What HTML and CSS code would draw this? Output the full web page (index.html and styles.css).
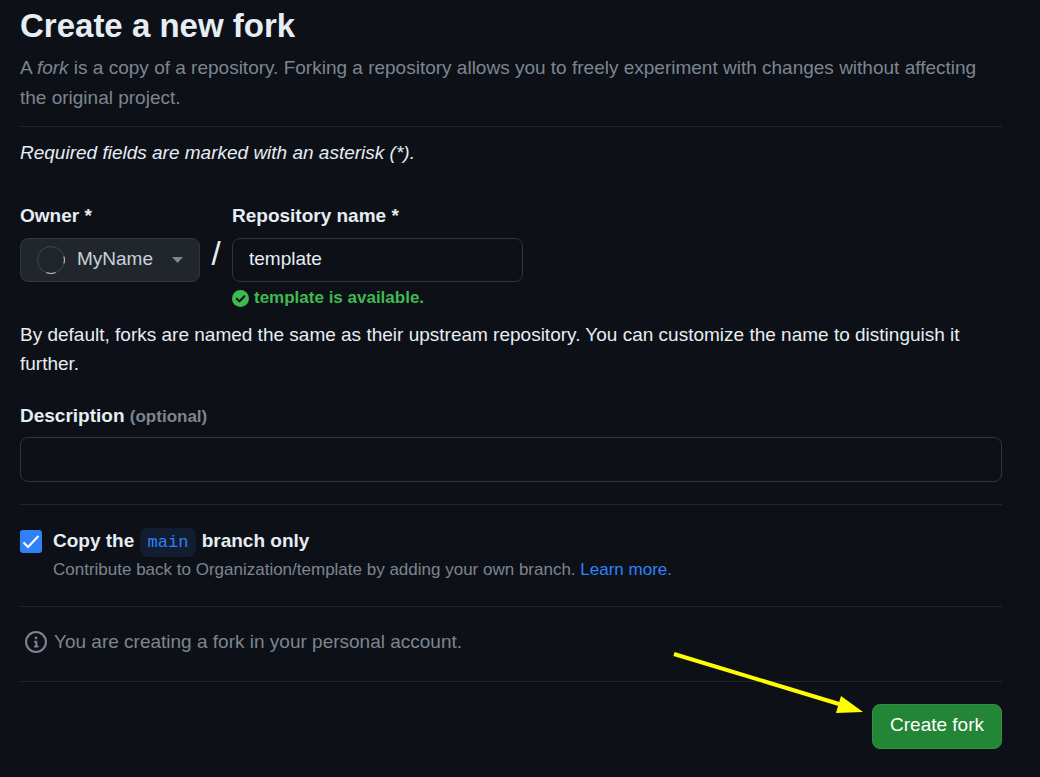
FILE: index.html
```html
<!DOCTYPE html>
<html lang="en">
<head>
<meta charset="utf-8">
<meta name="viewport" content="width=device-width, initial-scale=1">
<title>Create a new fork</title>
<link rel="stylesheet" href="styles.css">
</head>
<body>
<main class="page">
  <header class="intro">
    <h1 class="title">Create a new fork</h1>
    <p class="lead">A <em>fork</em> is a copy of a repository. Forking a repository allows you to freely experiment with changes without affecting the original project.</p>
  </header>
  <form class="form">
    <p class="required">Required fields are marked with an asterisk (*).</p>
    <div class="names">
      <div class="field">
        <label class="label" for="owner">Owner *</label>
        <div class="owner">
          <svg class="avatar" viewBox="0 0 28 28" fill="none" aria-hidden="true">
            <circle cx="14" cy="14" r="13.500" stroke="#43474b"/>
            <path d="M9.400 26.700A13.500 13.500 0 0 0 18.600 26.700M27 10.500A13.500 13.500 0 0 1 27 17.500" stroke="#c9c9c6"/>
          </svg>
          <select class="owner-select" id="owner"><option>MyName</option></select>
          <svg class="caret" viewBox="0 0 11 6" aria-hidden="true"><path d="M0 0h11L5.500 6z" fill="#7d8590"/></svg>
        </div>
      </div>
      <span class="slash">/</span>
      <div class="field">
        <label class="label" for="repo">Repository name *</label>
        <input class="input repo" id="repo" type="text" value="template">
        <p class="status">
          <svg class="status-icon" viewBox="0 0 17 17" aria-hidden="true">
            <circle cx="8.500" cy="8.500" r="8.500" fill="#3fb950"/>
            <path d="M4.700 8.700l2.700 2.700 5-5.200" fill="none" stroke="#0d1117" stroke-width="2" stroke-linecap="round" stroke-linejoin="round"/>
          </svg>
          template is available.
        </p>
      </div>
    </div>
    <p class="help">By default, forks are named the same as their upstream repository. You can customize the name to distinguish it further.</p>
    <div class="field description">
      <label class="label" for="description">Description <span class="optional">(optional)</span></label>
      <input class="input" id="description" type="text">
    </div>
    <div class="branch">
      <input class="check" id="main-only" type="checkbox" checked>
      <div class="branch-text">
        <label class="label" for="main-only">Copy the <code class="code">main</code> branch only</label>
        <p class="note">Contribute back to Organization/template by adding your own branch. <a class="link" href="#">Learn more.</a></p>
      </div>
    </div>
    <div class="account">
      <svg class="info" viewBox="0 0 16 16" fill="#7d8590" aria-hidden="true">
        <path d="M0 8a8 8 0 1 1 16 0A8 8 0 0 1 0 8Zm8-6.500a6.500 6.500 0 1 0 0 13 6.500 6.500 0 0 0 0-13ZM6.500 7.750A.75.75 0 0 1 7.250 7h1a.75.75 0 0 1 .75.75v2.750h.25a.75.75 0 0 1 0 1.500h-2a.75.75 0 0 1 0-1.500h.25v-2h-.25a.75.75 0 0 1-.75-.75ZM8 6a1 1 0 1 1 0-2 1 1 0 0 1 0 2Z"/>
      </svg>
      <p>You are creating a fork in your personal account.</p>
    </div>
    <div class="actions">
      <button class="submit" type="submit">Create fork</button>
      <svg class="arrow" viewBox="0 0 190 64" aria-hidden="true">
        <path d="M1 3L166 53" stroke="#ff0" stroke-width="4"/>
        <path d="M190 61L168 45l-5 17z" fill="#ff0"/>
      </svg>
    </div>
  </form>
</main>
</body>
</html>
```

FILE: styles.css
```css
* {
  box-sizing: border-box;
}

body {
  margin: 0;
  background: #0d1117;
  color: #e6edf3;
  font: 19px/29px "Liberation Sans", Arial, sans-serif;
}

h1,
p {
  margin: 0;
}

.page {
  padding: 5px 38px 28px 20px;
}

.intro {
  padding-bottom: 13px;
  border-bottom: 1px solid #21262d;
}

.title {
  margin-bottom: 6px;
  font-size: 33px;
  line-height: 42px;
}

.lead {
  color: #7d8590;
  line-height: 30px;
}

.required {
  margin-top: 11px;
  font-style: italic;
}

.names {
  display: flex;
  margin-top: 34px;
}

.field {
  display: flex;
  flex-direction: column;
  gap: 8px;
}

.label {
  font-weight: 600;
}

.owner {
  display: flex;
  align-items: center;
  width: 180px;
  height: 44px;
  padding: 0 16px;
  border: 1px solid #30363d;
  border-radius: 8px;
  background: #21262d;
}

.avatar {
  flex: none;
  width: 28px;
  height: 28px;
}

.owner-select {
  flex: 1;
  min-width: 0;
  height: 40px;
  padding: 0 0 3px 12px;
  border: 0;
  appearance: none;
  background: transparent;
  color: #c9d1d9;
  font: inherit;
}

.caret {
  flex: none;
  width: 11px;
  height: 6px;
}

.slash {
  width: 32px;
  padding-top: 38px;
  font-size: 33px;
  text-align: center;
}

.input {
  width: 100%;
  height: 45px;
  padding: 0 16px 3px;
  border: 1px solid #30363d;
  border-radius: 8px;
  background: #0d1117;
  color: #e6edf3;
  font: inherit;
}

.repo {
  width: 291px;
  height: 44px;
}

.status {
  display: flex;
  align-items: center;
  gap: 5px;
  margin-top: -4px;
  color: #3fb950;
  font-size: 17px;
  font-weight: 600;
  line-height: 24px;
}

.status-icon {
  width: 17px;
  height: 17px;
}

.help {
  margin-top: 10px;
}

.description {
  gap: 6px;
  margin-top: 23px;
  padding-bottom: 22px;
  border-bottom: 1px solid #21262d;
}

.optional {
  color: #7d8590;
  font-size: 17px;
}

.branch {
  display: flex;
  gap: 11px;
  padding: 21px 0 23px;
  border-bottom: 1px solid #21262d;
}

.check {
  flex: none;
  width: 22px;
  height: 23px;
  margin: 4px 0 0;
  border-radius: 3px;
  appearance: none;
  background: #2f81f7 url("data:image/svg+xml,%3Csvg xmlns='http://www.w3.org/2000/svg' viewBox='0 0 22 23'%3E%3Cpath d='M3.500 12.500l4.500 4.500L18.500 6' fill='none' stroke='white' stroke-width='2'/%3E%3C/svg%3E");
}

.code {
  padding: 5px 8px;
  border-radius: 8px;
  background: #121d2f;
  color: #2f81f7;
  font: 17px/20px "Liberation Mono", monospace;
}

.note {
  margin-top: 2px;
  color: #7d8590;
  font-size: 17px;
  line-height: 26px;
}

.link {
  color: #2f81f7;
  text-decoration: none;
}

.account {
  display: flex;
  align-items: center;
  gap: 7px;
  padding: 20px 0 25px 5px;
  border-bottom: 1px solid #21262d;
  color: #7d8590;
}

.info {
  width: 22px;
  height: 22px;
}

.actions {
  position: relative;
  display: flex;
  justify-content: flex-end;
  padding-top: 22px;
}

.submit {
  height: 45px;
  padding: 0 17px 4px;
  border: 1px solid #2f9043;
  border-radius: 8px;
  background: #238636;
  color: #fff;
  font: inherit;
}

.arrow {
  position: absolute;
  top: -31px;
  right: 139px;
  width: 190px;
  height: 64px;
}
```
